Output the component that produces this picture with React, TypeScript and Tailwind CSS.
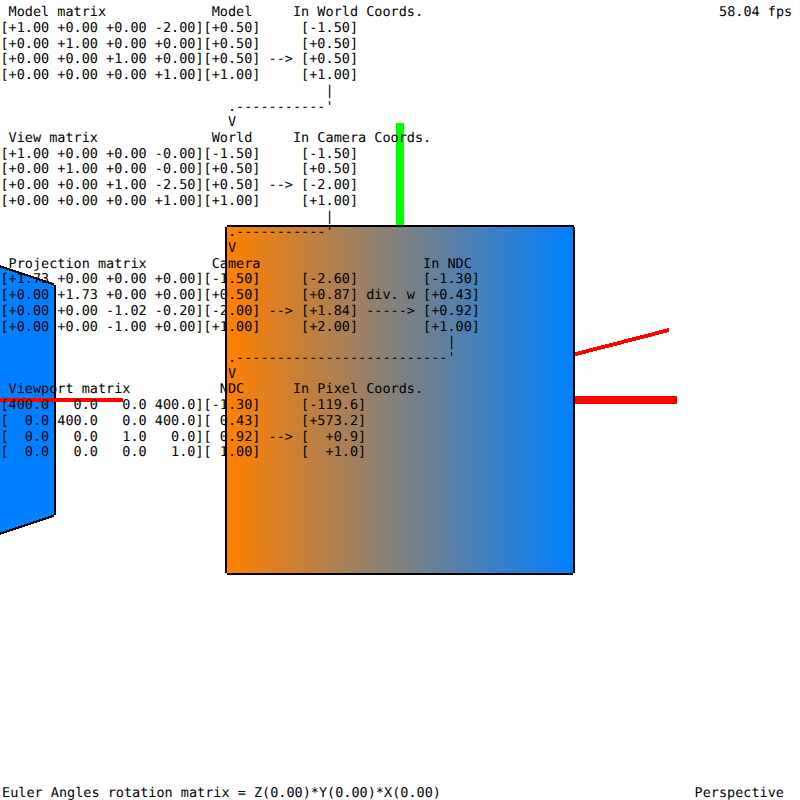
const transforms = [
  " Model matrix             Model     In World Coords.",
  "[+1.00 +0.00 +0.00 -2.00][+0.50]     [-1.50]",
  "[+0.00 +1.00 +0.00 +0.00][+0.50]     [+0.50]",
  "[+0.00 +0.00 +1.00 +0.00][+0.50] --> [+0.50]",
  "[+0.00 +0.00 +0.00 +1.00][+1.00]     [+1.00]",
  "                                        |",
  "                            .-----------'",
  "                            V",
  " View matrix              World     In Camera Coords.",
  "[+1.00 +0.00 +0.00 -0.00][-1.50]     [-1.50]",
  "[+0.00 +1.00 +0.00 -0.00][+0.50]     [+0.50]",
  "[+0.00 +0.00 +1.00 -2.50][+0.50] --> [-2.00]",
  "[+0.00 +0.00 +0.00 +1.00][+1.00]     [+1.00]",
  "                                        |",
  "                            .-----------'",
  "                            V",
  " Projection matrix        Camera                    In NDC",
  "[+1.73 +0.00 +0.00 +0.00][-1.50]     [-2.60]        [-1.30]",
  "[+0.00 +1.73 +0.00 +0.00][+0.50]     [+0.87] div. w [+0.43]",
  "[+0.00 +0.00 -1.02 -0.20][-2.00] --> [+1.84] -----> [+0.92]",
  "[+0.00 +0.00 -1.00 +0.00][+1.00]     [+2.00]        [+1.00]",
  "                                                       |",
  "                            .--------------------------'",
  "                            V",
  " Viewport matrix           NDC      In Pixel Coords.",
  "[400.0   0.0   0.0 400.0][-1.30]     [-119.6]",
  "[  0.0 400.0   0.0 400.0][ 0.43]     [+573.2]",
  "[  0.0   0.0   1.0   0.0][ 0.92] --> [  +0.9]",
  "[  0.0   0.0   0.0   1.0][ 1.00]     [  +1.0]",
];

function Scene() {
  return (
    <svg className="absolute inset-0" width="800" height="800" viewBox="0 0 800 800" shapeRendering="crispEdges">
      <defs>
        <linearGradient id="face" gradientUnits="userSpaceOnUse" x1="227" y1="0" x2="573" y2="0">
          <stop offset="0" stopColor="#ff8000" />
          <stop offset="1" stopColor="#0080ff" />
        </linearGradient>
      </defs>
      <polygon points="0,266 54,284 54,516 0,534" fill="#0080ff" />
      <path d="M0 266.3 L54 284.3 M54 515.7 L0 533.7" stroke="#000" strokeWidth="2" />
      <rect x="54" y="285" width="2" height="230" />
      <rect x="0" y="398" width="123" height="4" fill="#f00" />
      <rect x="396" y="123" width="8" height="103" fill="#0f0" />
      <rect x="574" y="396" width="103" height="8" fill="#f00" />
      <polygon points="574,352.5 669,328 669,332 574,356.5" fill="#f00" />
      <rect x="227" y="226" width="346" height="348" fill="url(#face)" />
      <rect x="227" y="225" width="347" height="2" />
      <rect x="225" y="227" width="2" height="346" />
      <rect x="573" y="227" width="2" height="346" />
      <rect x="227" y="573" width="346" height="2" />
    </svg>
  );
}

export default function App() {
  return (
    <main className="relative flex h-[800px] w-[800px] flex-col justify-between overflow-hidden bg-white font-['DejaVu_Sans_Mono',monospace] text-[13.5px] leading-[15.715px] text-black antialiased [text-rendering:geometricPrecision]">
      <Scene />
      <div className="relative flex justify-between pt-[5.2px] pr-[7.8px] pl-[0.4px]">
        <pre className="font-[inherit]">{transforms.join("\n")}</pre>
        <span className="whitespace-pre">58.04 fps</span>
      </div>
      <div className="relative -mb-0.5 flex justify-between pr-4 pl-0.5">
        <span className="whitespace-pre">Euler Angles rotation matrix = Z(0.00)*Y(0.00)*X(0.00)</span>
        <span>Perspective</span>
      </div>
    </main>
  );
}
